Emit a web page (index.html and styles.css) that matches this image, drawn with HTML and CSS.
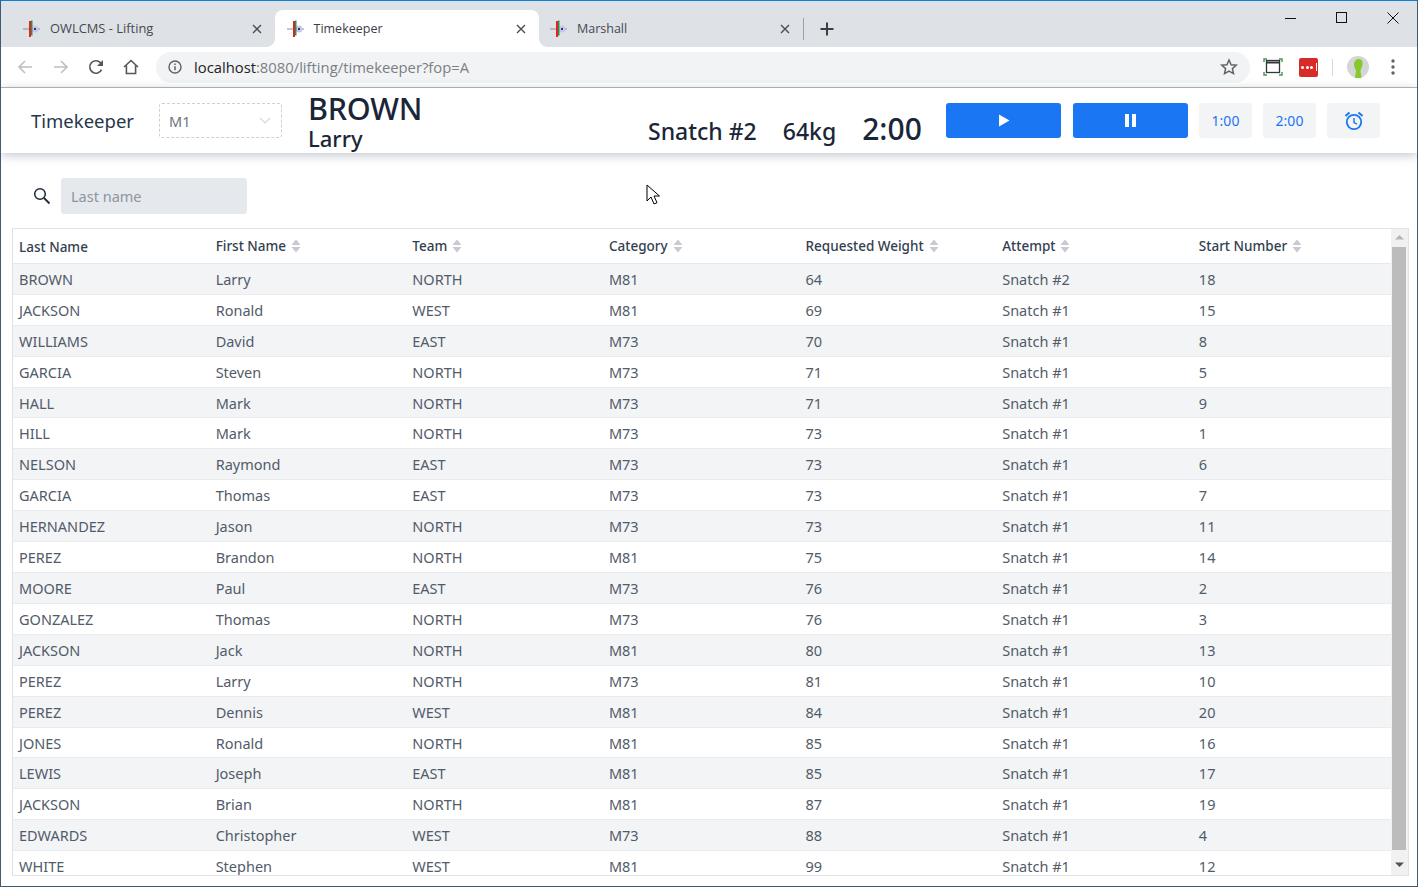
FILE: index.html
```html
<!DOCTYPE html>
<html lang="en">
<head>
  <meta charset="UTF-8" />
  <title>Timekeeper</title>
  <link rel="stylesheet" href="styles.css">
</head>
<body>
  <svg class="defs" width="0" height="0">
    <symbol id="favicon" viewBox="0 0 18 18">
      <path d="M0 9h17" stroke="#8a8f96" stroke-width="1"/>
      <circle cx="12" cy="9" r="3.500" fill="#c9c5ee"/>
      <rect x="11" y="8" width="2" height="2" fill="#3a3560"/>
      <rect x="6" y="1" width="2" height="16" fill="#ee1c25"/>
      <rect x="8" y="0.500" width="1.500" height="15" fill="#1d9a45"/>
    </symbol>
    <symbol id="close" viewBox="0 0 10 10">
      <path d="M1 1l8 8M9 1l-8 8" stroke="#4a4d52" stroke-width="1.400" fill="none"/>
    </symbol>
    <symbol id="sort" viewBox="0 0 10 14">
      <path d="M5 0.500l4.500 5.500h-9zM5 13.500l4.500-5.500h-9z" fill="#c6cad1"/>
    </symbol>
  </svg>

  <div class="window">
    <div class="tabstrip">
      <div class="tab">
        <svg class="favicon"><use href="#favicon"/></svg>
        <span class="tab-title">OWLCMS - Lifting</span>
        <svg class="tab-close"><use href="#close"/></svg>
      </div>
      <div class="tab tab-active">
        <svg class="favicon"><use href="#favicon"/></svg>
        <span class="tab-title">Timekeeper</span>
        <svg class="tab-close"><use href="#close"/></svg>
      </div>
      <div class="tab tab-last">
        <svg class="favicon"><use href="#favicon"/></svg>
        <span class="tab-title">Marshall</span>
        <svg class="tab-close"><use href="#close"/></svg>
      </div>
      <svg class="new-tab" width="14" height="14" viewBox="0 0 14 14"><path d="M7 0.500v13M0.500 7h13" stroke="#3c4043" stroke-width="2"/></svg>
      <div class="win-controls">
        <svg width="12" height="12" viewBox="0 0 12 12"><path d="M0 6.500h11" stroke="#111" stroke-width="1"/></svg>
        <svg width="12" height="12" viewBox="0 0 12 12"><rect x="0.500" y="0.500" width="10" height="10" fill="none" stroke="#111"/></svg>
        <svg width="12" height="12" viewBox="0 0 12 12"><path d="M0.500 0.500l11 11M11.500 0.500l-11 11" stroke="#111" stroke-width="1"/></svg>
      </div>
    </div>

    <div class="toolbar">
      <svg class="nav-icon nav-back" width="16" height="16" viewBox="0 0 16 16"><path d="M15 8H2M8 2L2 8l6 6" fill="none" stroke="#bcbfc3" stroke-width="1.600"/></svg>
      <svg class="nav-icon" width="16" height="16" viewBox="0 0 16 16"><path d="M1 8h13M8 2l6 6-6 6" fill="none" stroke="#bcbfc3" stroke-width="1.600"/></svg>
      <svg class="nav-icon" width="16" height="16" viewBox="0 0 16 16"><path d="M13.600 10.600A6.200 6.200 0 1 1 12.400 3.600L14.600 5.600" fill="none" stroke="#54575b" stroke-width="1.600"/><path d="M15 1v6H9z" fill="#54575b"/></svg>
      <svg class="nav-icon nav-home" width="16" height="16" viewBox="0 0 16 16"><path d="M1 8l7-6.500L15 8M3.400 6.500V14.500h9.200V6.500" fill="none" stroke="#54575b" stroke-width="1.600"/></svg>
      <div class="omnibox">
        <svg width="14" height="14" viewBox="0 0 14 14"><circle cx="7" cy="7" r="6" fill="none" stroke="#5f6368" stroke-width="1.400"/><path d="M7 6.200v4M7 3.400v1.600" stroke="#5f6368" stroke-width="1.500"/></svg>
        <span class="url"><span class="url-host">localhost</span>:8080/lifting/timekeeper?fop=A</span>
        <svg class="star" width="18" height="18" viewBox="0 0 18 18"><path d="M9 2l2.100 4.700 5.100.5-3.800 3.400 1.100 5L9 13l-4.500 2.600 1.100-5L1.800 7.200l5.100-.5z" fill="none" stroke="#5f6368" stroke-width="1.500"/></svg>
      </div>
      <svg class="screencast" width="20" height="18" viewBox="0 0 20 18">
        <path d="M1 4V1h3M16 1h3v3M19 14v3h-3M4 17H1v-3" fill="none" stroke="#3f9a4a" stroke-width="1.400"/>
        <rect x="3.500" y="2.500" width="13" height="12" fill="none" stroke="#33363a" stroke-width="1.300"/>
        <path d="M3.500 4.500h13" stroke="#33363a" stroke-width="2"/>
      </svg>
      <div class="lastpass"><i></i><i></i><i></i><b></b></div>
      <div class="tool-sep"></div>
      <svg class="avatar" width="22" height="22" viewBox="0 0 22 22">
        <circle cx="11" cy="11" r="11" fill="#d4d6d6"/>
        <path d="M7 9c0-4 2-6 5-6s4 3 3.500 6-2 4-2 6l1 7H8l1-7c0-2-2-3-2-6z" fill="#86c92e"/>
      </svg>
      <svg class="menu" width="4" height="16" viewBox="0 0 4 16"><circle cx="2" cy="2" r="1.700" fill="#5f6368"/><circle cx="2" cy="8" r="1.700" fill="#5f6368"/><circle cx="2" cy="14" r="1.700" fill="#5f6368"/></svg>
    </div>

    <div class="app-header">
      <div class="app-title">Timekeeper</div>
      <div class="fop-select">
        <span>M1</span>
        <svg width="12" height="7" viewBox="0 0 12 7"><path d="M1 1l5 5 5-5" fill="none" stroke="#d5d8dc" stroke-width="1.200"/></svg>
      </div>
      <div class="athlete">
        <div class="athlete-last">BROWN</div>
        <div class="athlete-first">Larry</div>
      </div>
      <div class="attempt">
        <span class="attempt-text">Snatch #2</span>
        <span class="attempt-text">64kg</span>
        <span class="attempt-clock">2:00</span>
      </div>
      <div class="controls">
        <button class="btn btn-primary btn-start">
          <svg width="12" height="13" viewBox="0 0 12 13"><path d="M1 0.500l10.500 6-10.500 6z" fill="#fff"/></svg>
        </button>
        <button class="btn btn-primary">
          <svg width="12" height="13" viewBox="0 0 12 13"><path d="M0 0h4v13H0zM7 0h4v13H7z" fill="#fff"/></svg>
        </button>
        <button class="btn btn-small">1:00</button>
        <button class="btn btn-small">2:00</button>
        <button class="btn btn-small">
          <svg width="20" height="20" viewBox="0 0 20 20"><circle cx="10" cy="11" r="7.200" fill="none" stroke="#1a76f2" stroke-width="1.800"/><path d="M10 7v4.500l3 1.700" fill="none" stroke="#1a76f2" stroke-width="1.400"/><path d="M1.500 5L5.500 1.500M18.500 5L14.500 1.500" stroke="#1a76f2" stroke-width="2"/></svg>
        </button>
      </div>
    </div>

    <div class="search-row">
      <svg width="18" height="18" viewBox="0 0 18 18"><circle cx="7" cy="7" r="5.300" fill="none" stroke="#1f2937" stroke-width="1.500"/><path d="M11 11l5.500 5.500" stroke="#1f2937" stroke-width="1.800"/></svg>
      <div class="search-input">Last name</div>
    </div>

    <div class="grid">
      <div class="grid-main">
        <div class="grid-head">
          <div class="head-cell head-plain">Last Name</div>
          <div class="head-cell">First Name <svg class="sort"><use href="#sort"/></svg></div>
          <div class="head-cell">Team <svg class="sort"><use href="#sort"/></svg></div>
          <div class="head-cell">Category <svg class="sort"><use href="#sort"/></svg></div>
          <div class="head-cell">Requested Weight <svg class="sort"><use href="#sort"/></svg></div>
          <div class="head-cell">Attempt <svg class="sort"><use href="#sort"/></svg></div>
          <div class="head-cell">Start Number <svg class="sort"><use href="#sort"/></svg></div>
        </div>
        <div class="row"><span>BROWN</span><span>Larry</span><span>NORTH</span><span>M81</span><span>64</span><span>Snatch #2</span><span>18</span></div>
        <div class="row"><span>JACKSON</span><span>Ronald</span><span>WEST</span><span>M81</span><span>69</span><span>Snatch #1</span><span>15</span></div>
        <div class="row"><span>WILLIAMS</span><span>David</span><span>EAST</span><span>M73</span><span>70</span><span>Snatch #1</span><span>8</span></div>
        <div class="row"><span>GARCIA</span><span>Steven</span><span>NORTH</span><span>M73</span><span>71</span><span>Snatch #1</span><span>5</span></div>
        <div class="row"><span>HALL</span><span>Mark</span><span>NORTH</span><span>M73</span><span>71</span><span>Snatch #1</span><span>9</span></div>
        <div class="row"><span>HILL</span><span>Mark</span><span>NORTH</span><span>M73</span><span>73</span><span>Snatch #1</span><span>1</span></div>
        <div class="row"><span>NELSON</span><span>Raymond</span><span>EAST</span><span>M73</span><span>73</span><span>Snatch #1</span><span>6</span></div>
        <div class="row"><span>GARCIA</span><span>Thomas</span><span>EAST</span><span>M73</span><span>73</span><span>Snatch #1</span><span>7</span></div>
        <div class="row"><span>HERNANDEZ</span><span>Jason</span><span>NORTH</span><span>M73</span><span>73</span><span>Snatch #1</span><span>11</span></div>
        <div class="row"><span>PEREZ</span><span>Brandon</span><span>NORTH</span><span>M81</span><span>75</span><span>Snatch #1</span><span>14</span></div>
        <div class="row"><span>MOORE</span><span>Paul</span><span>EAST</span><span>M73</span><span>76</span><span>Snatch #1</span><span>2</span></div>
        <div class="row"><span>GONZALEZ</span><span>Thomas</span><span>NORTH</span><span>M73</span><span>76</span><span>Snatch #1</span><span>3</span></div>
        <div class="row"><span>JACKSON</span><span>Jack</span><span>NORTH</span><span>M81</span><span>80</span><span>Snatch #1</span><span>13</span></div>
        <div class="row"><span>PEREZ</span><span>Larry</span><span>NORTH</span><span>M73</span><span>81</span><span>Snatch #1</span><span>10</span></div>
        <div class="row"><span>PEREZ</span><span>Dennis</span><span>WEST</span><span>M81</span><span>84</span><span>Snatch #1</span><span>20</span></div>
        <div class="row"><span>JONES</span><span>Ronald</span><span>NORTH</span><span>M81</span><span>85</span><span>Snatch #1</span><span>16</span></div>
        <div class="row"><span>LEWIS</span><span>Joseph</span><span>EAST</span><span>M81</span><span>85</span><span>Snatch #1</span><span>17</span></div>
        <div class="row"><span>JACKSON</span><span>Brian</span><span>NORTH</span><span>M81</span><span>87</span><span>Snatch #1</span><span>19</span></div>
        <div class="row"><span>EDWARDS</span><span>Christopher</span><span>WEST</span><span>M73</span><span>88</span><span>Snatch #1</span><span>4</span></div>
        <div class="row"><span>WHITE</span><span>Stephen</span><span>WEST</span><span>M81</span><span>99</span><span>Snatch #1</span><span>12</span></div>
      </div>
      <div class="scrollbar">
        <svg class="scroll-up" width="17" height="17" viewBox="0 0 17 17"><path d="M8.500 6l4.500 4.500H4z" fill="#b5b5b5"/></svg>
        <div class="scroll-thumb"></div>
        <svg class="scroll-down" width="17" height="17" viewBox="0 0 17 17"><path d="M8.500 11L4 6.500h9z" fill="#505050"/></svg>
      </div>
    </div>

    <svg class="cursor" width="14" height="22" viewBox="0 0 14 22"><path d="M1 1v16l4-4 3 7 3-1.300-3-6.700h5.500z" fill="#fff" stroke="#000" stroke-width="1"/></svg>
  </div>
</body>
</html>
```

FILE: styles.css
```css
* {
  box-sizing: border-box;
}
body {
  margin: 0;
  font-family: "Noto Sans", sans-serif;
  color: #1a2638;
  background: #fff;
}
.defs {
  position: absolute;
}
.window {
  position: relative;
  height: 887px;
  overflow: hidden;
  border: 1px solid #3f5a72;
  border-top-color: #0f80d8;
}

/* browser chrome */
.tabstrip {
  display: flex;
  align-items: flex-end;
  height: 46px;
  padding-left: 9px;
  background: #dee1e6;
}
.tab {
  position: relative;
  display: flex;
  align-items: center;
  flex: 0 0 264.500px;
  height: 37px;
  padding: 0 13px 0 13px;
  font-family: "Open Sans", sans-serif;
  font-size: 12.500px;
  line-height: 17px;
  color: #45494f;
}
.tab:first-child .tab-title {
  font-size: 12.900px;
}
.tab-active {
  padding-left: 12px;
  background: #fff;
  border-radius: 8px 8px 0 0;
  color: #3c4043;
}
.tab-active::before,
.tab-active::after {
  content: "";
  position: absolute;
  bottom: 0;
  width: 8px;
  height: 8px;
  background: radial-gradient(circle at 0 0, #dee1e6 7.500px, #fff 8px);
}
.tab-active::before {
  left: -8px;
}
.tab-active::after {
  right: -8px;
  background: radial-gradient(circle at 100% 0, #dee1e6 7.500px, #fff 8px);
}
.tab-last {
  padding-left: 11px;
  padding-right: 14px;
}
.favicon {
  width: 18px;
  height: 18px;
  margin-right: 9px;
}
.tab-title {
  flex: 1;
}
.tab-close {
  width: 10px;
  height: 10px;
}
.tab-last::after {
  content: "";
  position: absolute;
  right: 0;
  top: 8px;
  height: 22px;
  border-right: 1px solid #9ea2a7;
}
.new-tab {
  margin: 0 0 11px 16px;
}
.win-controls {
  display: flex;
  align-self: flex-start;
  gap: 39px;
  margin: 11px 18px 0 auto;
}
.toolbar {
  display: flex;
  align-items: center;
  height: 41px;
  padding-left: 16px;
  background: #fff;
  border-bottom: 1px solid #b6b8ba;
}
.nav-icon {
  margin-right: 19px;
}
.nav-back {
  margin-right: 20px;
}
.nav-home {
  margin-right: 17px;
}
.omnibox {
  display: flex;
  align-items: center;
  flex: 0 0 1094px;
  height: 31px;
  padding: 0 12px 0 12px;
  border-radius: 16px;
  background: #f1f3f4;
}
.url {
  flex: 1;
  margin-left: 12px;
  font-family: "Open Sans", sans-serif;
  font-size: 14.800px;
  color: #7b7f84;
}
.url-host {
  color: #1f2124;
}
.screencast {
  margin-left: 13px;
}
.lastpass {
  display: flex;
  align-items: center;
  gap: 1.500px;
  width: 19px;
  height: 19px;
  margin-left: 16px;
  padding-left: 2px;
  border-radius: 2px;
  background: #d92a2a;
}
.lastpass i {
  width: 3px;
  height: 3px;
  border-radius: 50%;
  background: #fff;
}
.lastpass b {
  width: 1px;
  height: 8px;
  margin-left: 1px;
  background: #fff;
}
.tool-sep {
  width: 1px;
  height: 17px;
  margin-left: 14px;
  background: #d5d7da;
}
.avatar {
  margin-left: 14px;
}
.menu {
  margin-left: 22px;
}

/* page header */
.app-header {
  position: relative;
  display: flex;
  align-items: center;
  height: 65px;
  padding-left: 30px;
  background: #fff;
  box-shadow: 0 2px 10px rgba(70, 85, 110, 0.35);
}
.app-title {
  width: 128px;
  font-size: 18.500px;
  color: #27364a;
}
.fop-select {
  display: flex;
  align-items: center;
  justify-content: space-between;
  width: 123px;
  height: 35px;
  padding: 0 10px 0 9px;
  border: 1px dashed #cdd0d5;
  border-radius: 3px;
  font-size: 14.500px;
  color: #6b7482;
}
.athlete {
  width: 340px;
  margin: -3px 0 0 26px;
  line-height: 1;
}
.athlete-last {
  font-size: 30.500px;
  font-weight: 500;
  line-height: 38px;
  letter-spacing: -0.200px;
}
.athlete-first {
  font-size: 22px;
  font-weight: 500;
  line-height: 23px;
}
.attempt {
  display: flex;
  align-items: baseline;
  gap: 26px;
  width: 298px;
  margin-top: 16px;
}
.attempt-text {
  font-size: 23px;
  font-weight: 500;
}
.attempt-clock {
  font-size: 30px;
  font-weight: 500;
}
.controls {
  display: flex;
  gap: 11px;
}
.btn {
  display: flex;
  align-items: center;
  justify-content: center;
  height: 35px;
  padding: 0;
  border: none;
  border-radius: 3px;
  font-family: inherit;
  font-size: 14px;
  color: #1a76f2;
}
.btn-primary {
  width: 115px;
  background: #1a76f2;
}
.btn-start {
  margin-right: 1px;
}
.btn-small {
  width: 53px;
  background: #f3f4f6;
}

/* search */
.search-row {
  display: flex;
  align-items: center;
  gap: 10px;
  height: 75px;
  padding: 11px 0 0 32px;
}
.search-input {
  display: flex;
  align-items: center;
  width: 186px;
  height: 36px;
  padding-left: 10px;
  border-radius: 3px;
  background: #e5e8ec;
  font-size: 14.500px;
  color: #8e95a1;
}

/* grid */
.grid {
  display: flex;
  height: 648px;
  margin: 0 8px 0 11px;
  border: 1px solid #dfe2e6;
}
.grid-main {
  flex: 1;
  overflow: hidden;
}
.grid-head,
.row {
  display: grid;
  grid-template-columns: repeat(7, 196.650px);
  align-items: center;
}
.grid-head {
  height: 34.960px;
  border-bottom: 1px solid #e6e8eb;
}
.head-cell {
  display: flex;
  align-items: center;
  gap: 5px;
  padding-left: 6px;
  font-size: 13.500px;
  font-weight: 500;
  color: #333f50;
}
.head-plain {
  padding-top: 2px;
}
.sort {
  width: 10px;
  height: 14px;
}
.row {
  height: 30.917px;
  border-bottom: 1px solid #e9ebee;
  font-size: 14.500px;
  line-height: 20px;
  color: #525b69;
}
.row:nth-child(even) {
  background: #f3f4f6;
}
.row span {
  padding-left: 6px;
}
.scrollbar {
  display: flex;
  flex-direction: column;
  flex: 0 0 17px;
  background: #f1f1f1;
}
.scroll-up {
  flex: none;
  margin-bottom: 1px;
}
.scroll-thumb {
  height: 603px;
  margin: 0 2px 0 1px;
  background: #bcbcbc;
}
.scroll-down {
  flex: none;
  margin: auto 0 2px;
}
.cursor {
  position: absolute;
  left: 645px;
  top: 183px;
}
```
